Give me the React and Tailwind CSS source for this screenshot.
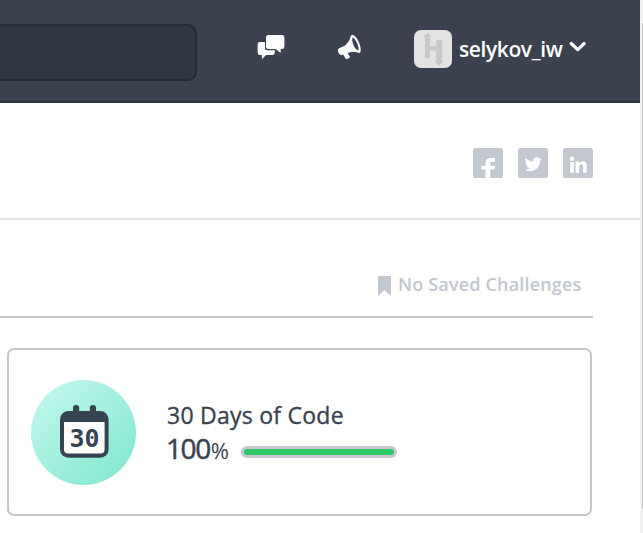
import React from 'react';

function ChatIcon() {
  return (
    <svg width="28" height="25" viewBox="0 0 28 25" fill="#fff" className="shrink-0">
      <path d="M3 8H8V17Q8 19 10 19H17.8Q17.6 21 15.2 21H9L5.3 24.7Q4.9 25 4.9 24.4V21H3Q.6 21 .6 18.5V10.4Q.6 8 3 8Z" />
      <path d="M7.6 8V13Q7.6 16.2 10.8 16.2H17.8V19H7V8Z" />
      <path d="M11.5 1H25Q27.4 1 27.4 3.4V12.5Q27.4 15 25 15H23.7V18.3Q23.6 18.8 23.1 18.5L19.2 15.5Q18.6 15 17.7 15H11.5Q9 15 9 12.5V3.4Q9 1 11.5 1Z" />
    </svg>
  );
}

function MegaphoneIcon() {
  return (
    <svg width="25" height="26" viewBox="0 0 25 26" fill="none" className="shrink-0">
      <path d="M2.2 14.2L8.2 11.4Q12.7 7.2 13.7 2.2Q14.1.6 15.8 1Q19.2 2.3 21.4 7.2Q24.5 13.7 23.5 17.6Q23.1 19.3 21.3 18.8Q16.8 16.9 12.1 18.4L10.7 19L12.8 22.8Q13 23.5 12.4 23.9L9.6 25Q8.9 25.2 8.5 24.5L6.2 20.4L4.5 20.9Q2.5 21.3 1.4 18.8Q.1 15.4 2.2 14.2Z" fill="#fff" />
      <path d="M15.5 3.3Q18.2 4.5 20.1 8.9Q22.3 13.7 21.4 16.6Q18.5 15.5 16.4 10.9Q14.5 6.8 15.5 3.3Z" fill="#3b414f" />
    </svg>
  );
}

function Avatar() {
  return (
    <svg width="38" height="38" viewBox="0 0 38 38" className="ml-[52px] shrink-0">
      <rect width="38" height="38" rx="7" fill="#e3e3e3" />
      <path d="M13.3 2.8L18 7H16V16H22.2V10H28V31H29.7L25 35.5L20.3 31H22.2V20.5H16V28H11V7H8.7Z" fill="#c9c9c9" />
    </svg>
  );
}

function Header() {
  return (
    <header className="flex h-[103px] shrink-0 items-start border-b-2 border-[#293241] bg-[#3b414f]">
      <div className="mt-6 h-[57px] w-[197px] shrink-0 rounded-r-[9px] border-y-2 border-r-2 border-[#252c33] bg-[#303740]" />
      <div className="ml-[60px] mt-[34px]"><ChatIcon /></div>
      <div className="ml-[52px] mt-[34px]"><MegaphoneIcon /></div>
      <div className="mt-[30px] flex h-[38px]">
        <Avatar />
        <span className="ml-[7px] w-[104px] whitespace-nowrap text-[21px] leading-[38px] font-semibold tracking-[-0.4px] text-white">selykov_iw</span>
        <svg width="17" height="12" viewBox="0 0 17 12" className="ml-[6px] mt-[11px]" fill="none" stroke="#fff" strokeWidth="3.2" strokeLinecap="round" strokeLinejoin="round">
          <path d="M2.2 2.5L8.7 8.6L15.2 2.5" />
        </svg>
      </div>
    </header>
  );
}

function SocialLinks() {
  return (
    <div className="flex h-[117px] items-start gap-[15px] border-b-2 border-[#dee2e7] pl-[473px] pt-[45px]">
      <svg width="30" height="30" viewBox="0 0 30 30">
        <rect width="30" height="30" rx="2.5" fill="#c2c7d0" />
        <path d="M12.4 30V21.6H8.3V17.7H12.4V15.3Q12.4 10 17.8 10H22V13.7H19Q17.2 13.7 17.2 15.6V17.7H22L21.3 21.6H17.2V30Z" fill="#fff" />
      </svg>
      <svg width="30" height="30" viewBox="0 0 30 30">
        <rect width="30" height="30" rx="2.5" fill="#c2c7d0" />
        <g transform="translate(6.7 7.8) scale(.71)">
          <path fill="#fff" d="M23.953 4.57a10 10 0 01-2.825.775 4.958 4.958 0 002.163-2.723c-.951.555-2.005.959-3.127 1.184a4.92 4.92 0 00-8.384 4.482C7.69 8.095 4.067 6.13 1.64 3.162a4.822 4.822 0 00-.666 2.475c0 1.71.87 3.213 2.188 4.096a4.904 4.904 0 01-2.228-.616v.06a4.923 4.923 0 003.946 4.827 4.996 4.996 0 01-2.212.085 4.936 4.936 0 004.604 3.417 9.867 9.867 0 01-6.102 2.105c-.39 0-.779-.023-1.17-.067a13.995 13.995 0 007.557 2.209c9.053 0 13.998-7.496 13.998-13.985 0-.21 0-.42-.015-.63A9.935 9.935 0 0024 4.59z" />
        </g>
      </svg>
      <svg width="30" height="30" viewBox="0 0 30 30">
        <rect width="30" height="30" rx="2.5" fill="#c2c7d0" />
        <circle cx="9" cy="10.7" r="2.2" fill="#fff" />
        <path d="M7.2 14H10.9V24.7H7.2ZM12.5 13.6H16.2V15.2Q17.3 13.2 19.6 13.2Q23.7 13.2 23.7 18V24.7H20V18.7Q20 16.3 18.3 16.3Q16.3 16.3 16.3 18.7V24.7H12.5Z" fill="#fff" />
      </svg>
    </div>
  );
}

function CalendarBadge() {
  return (
    <div className="flex size-[105px] shrink-0 items-center justify-center rounded-full bg-linear-to-br from-[#c5f8ee] to-[#7ce6ce]">
      <svg width="49" height="53" viewBox="0 0 49 53" className="ml-[2px] -mt-[2px]">
        <rect x="13" width="6.2" height="14" rx="3.1" fill="#364452" />
        <rect x="29.8" width="6.2" height="14" rx="3.1" fill="#364452" />
        <rect y="6" width="48.6" height="46.7" rx="8.5" fill="#364452" />
        <path d="M4 17H44.6V44.5Q44.6 48.6 40.5 48.6H8.1Q4 48.6 4 44.5Z" fill="#fff" />
        <text x="24.5" y="41.5" textAnchor="middle" textLength="30" lengthAdjust="spacingAndGlyphs" fontFamily="DejaVu Sans Mono, monospace" fontWeight="700" fontSize="24" fill="#364452">30</text>
      </svg>
    </div>
  );
}

export default function App() {
  return (
    <div className="flex h-[533px] w-[643px] overflow-hidden bg-white font-['Open_Sans','Noto_Sans',sans-serif]">
      <main className="flex w-[640px] shrink-0 flex-col">
        <Header />
        <SocialLinks />
        <div className="flex h-[98px] w-[593px] items-start border-b-2 border-[#c2c7d0] pl-[378px] pt-[52px] text-[#c2c7d0]">
          <svg width="13" height="20" viewBox="0 0 13 20" fill="currentColor" className="mt-[4px] shrink-0"><path d="M0 0H13V20L6.5 14L0 20Z" /></svg>
          <span className="ml-[7px] whitespace-nowrap text-[18px] leading-6 font-semibold tracking-[0.17px]">No Saved Challenges</span>
        </div>
        <section className="ml-[7px] mt-[30px] flex h-[168px] w-[585px] items-start rounded-[7px] border-2 border-[#c2c7d0] pl-[22px] pt-[30px] text-[#39424e]">
          <CalendarBadge />
          <div className="ml-[31px] mt-[19px]">
            <h2 className="h-[32px] whitespace-nowrap text-[23px] leading-[32px] font-medium tracking-[0.25px] [-webkit-text-stroke:0.35px_#39424e]">30 Days of Code</h2>
            <div className="flex h-[38px] items-center">
              <div className="w-[74px] whitespace-nowrap leading-[36px]">
                <span className="-ml-px text-[28px] font-medium tracking-[-1.4px] [-webkit-text-stroke:0.5px_#39424e]">100</span><span className="ml-[1px] text-[22px]">%</span>
              </div>
              <div className="mt-[3px] h-[12px] w-[156px] rounded-full bg-[#c2c7d0] p-[3px]">
                <div className="h-full w-full rounded-full bg-[#2ec866]" />
              </div>
            </div>
          </div>
        </section>
      </main>
      <div className="w-[3px] bg-[#f1f1f1] pl-[2px] pt-[23px]">
        <div className="h-[486px] w-px bg-[#c1c1c1]" />
      </div>
    </div>
  );
}
